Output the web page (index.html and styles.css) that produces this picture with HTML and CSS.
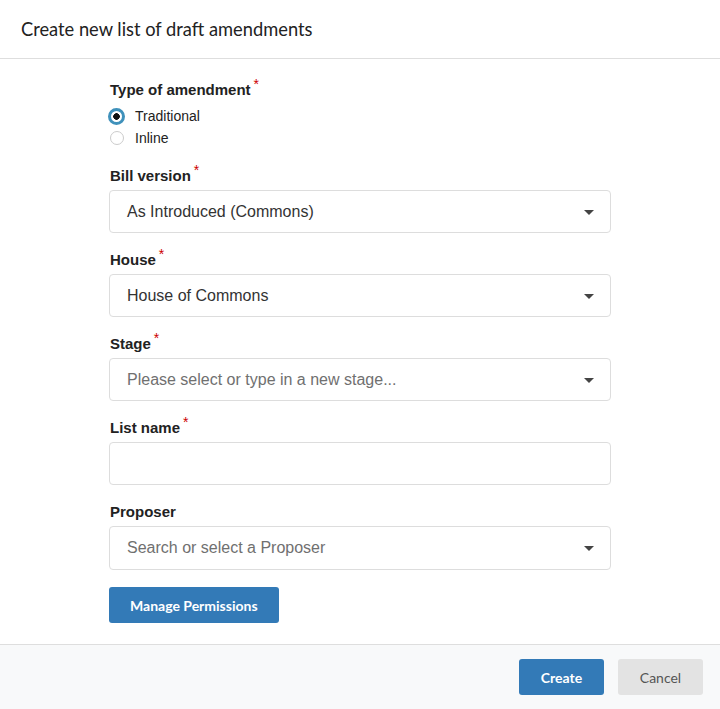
FILE: index.html
```html
<!DOCTYPE html>
<html lang="en">
<head>
    <meta charset="UTF-8">
    <meta name="viewport" content="width=device-width, initial-scale=1.0">
    <title>Create new list of draft amendments</title>
    <link rel="stylesheet" href="styles.css">
</head>
<body>
    <div class="modal">
        <div class="modal-header">
            <h1>Create new list of draft amendments</h1>
        </div>

        <div class="modal-body">
            <form class="form">
                <div class="field">
                    <span class="label required">Type of amendment</span>
                    <label class="radio">
                        <input type="radio" name="type" checked>
                        <span class="dot"></span>
                        Traditional
                    </label>
                    <label class="radio">
                        <input type="radio" name="type">
                        <span class="dot"></span>
                        Inline
                    </label>
                </div>

                <div class="field">
                    <span class="label required">Bill version</span>
                    <div class="select">As Introduced (Commons)</div>
                </div>

                <div class="field">
                    <span class="label required">House</span>
                    <div class="select">House of Commons</div>
                </div>

                <div class="field">
                    <span class="label required">Stage</span>
                    <div class="select placeholder">Please select or type in a new stage...</div>
                </div>

                <div class="field">
                    <span class="label required">List name</span>
                    <input class="input" type="text">
                </div>

                <div class="field">
                    <span class="label">Proposer</span>
                    <div class="select placeholder">Search or select a Proposer</div>
                </div>

                <button type="button" class="btn btn-primary">Manage Permissions</button>
            </form>
        </div>

        <div class="modal-footer">
            <button type="button" class="btn btn-primary btn-footer">Create</button>
            <button type="button" class="btn btn-default btn-footer">Cancel</button>
        </div>
    </div>
</body>
</html>
```

FILE: styles.css
```css
body {
    margin: 0;
    font-family: "Liberation Sans", Arial, sans-serif;
    color: #333;
    background: white;
}

.modal {
    width: 720px;
    height: 709px;
    display: flex;
    flex-direction: column;
}

/* Header */
.modal-header {
    flex-shrink: 0;
    height: 58px;
    padding: 0 21px;
    border-bottom: 1px solid #dedede;
    display: flex;
    align-items: center;
}

.modal-header h1 {
    margin: 0;
    font-family: Lato, sans-serif;
    font-size: 18.3px;
    font-weight: normal;
    color: #222;
}

/* Body */
.modal-body {
    flex-shrink: 0;
    padding: 22px 0 21px;
    border-bottom: 1px solid #dedede;
}

.form {
    width: 502px;
    margin: 0 auto;
}

.field {
    margin-bottom: 18px;
}

.field:first-child {
    margin-bottom: 18px;
}

.field:last-of-type {
    margin-bottom: 17px;
}

.label {
    display: block;
    font-size: 15px;
    font-weight: bold;
    line-height: 17px;
    margin: 0 0 6px 1px;
    color: #222;
}

.field:first-child .label {
    margin-bottom: 7px;
}

.required::after {
    content: "*";
    position: relative;
    top: -6px;
    color: #c00;
    font-size: 14px;
    line-height: 0;
    font-weight: normal;
    margin-left: 3px;
}

/* Radio buttons */
.radio {
    display: flex;
    align-items: center;
    gap: 11px;
    height: 22px;
    font-size: 14px;
    color: #222;
}

.radio input {
    display: none;
}

.radio .dot {
    width: 14px;
    height: 14px;
    border: 1px solid #ccc;
    border-radius: 50%;
    box-sizing: border-box;
    background: white;
}

.radio input:checked + .dot {
    width: 17px;
    height: 17px;
    margin-left: -1px;
    margin-right: -1px;
    border: 3px solid #3f91bb;
    background: radial-gradient(circle, #111 0 3px, white 3.6px);
}

.radio:not(:first-child) .dot {
    margin-left: 1px;
}

/* Selects and inputs */
.select,
.input {
    display: block;
    box-sizing: border-box;
    width: 100%;
    height: 43px;
    border: 1px solid #ddd;
    border-radius: 4px;
    padding: 0 40px 0 17px;
    font-family: "Liberation Sans", Arial, sans-serif;
    font-size: 16px;
    line-height: 41px;
    color: #333;
    background: white;
}

.select {
    position: relative;
}

.select::after {
    content: "";
    position: absolute;
    right: 16px;
    top: 19px;
    border-left: 5px solid transparent;
    border-right: 5px solid transparent;
    border-top: 5px solid #444;
}

.select.placeholder {
    color: #707070;
}

.field:last-of-type .select {
    height: 44px;
    line-height: 42px;
}

/* Buttons */
.btn {
    font-family: Lato, sans-serif;
    font-size: 14px;
    font-weight: bold;
    height: 36px;
    padding: 0 21px;
    border: none;
    border-radius: 3px;
    cursor: pointer;
}

.btn-primary {
    background: #337ab7;
    color: white;
}

.btn-default {
    background: #e3e3e3;
    color: #555;
    font-weight: normal;
}

.btn-footer {
    width: 85px;
    padding: 0;
}

/* Footer */
.modal-footer {
    flex: 1;
    background: #f8f9fa;
    display: flex;
    justify-content: flex-end;
    align-items: flex-start;
    gap: 14px;
    padding: 14px 17px 0 0;
}
```
